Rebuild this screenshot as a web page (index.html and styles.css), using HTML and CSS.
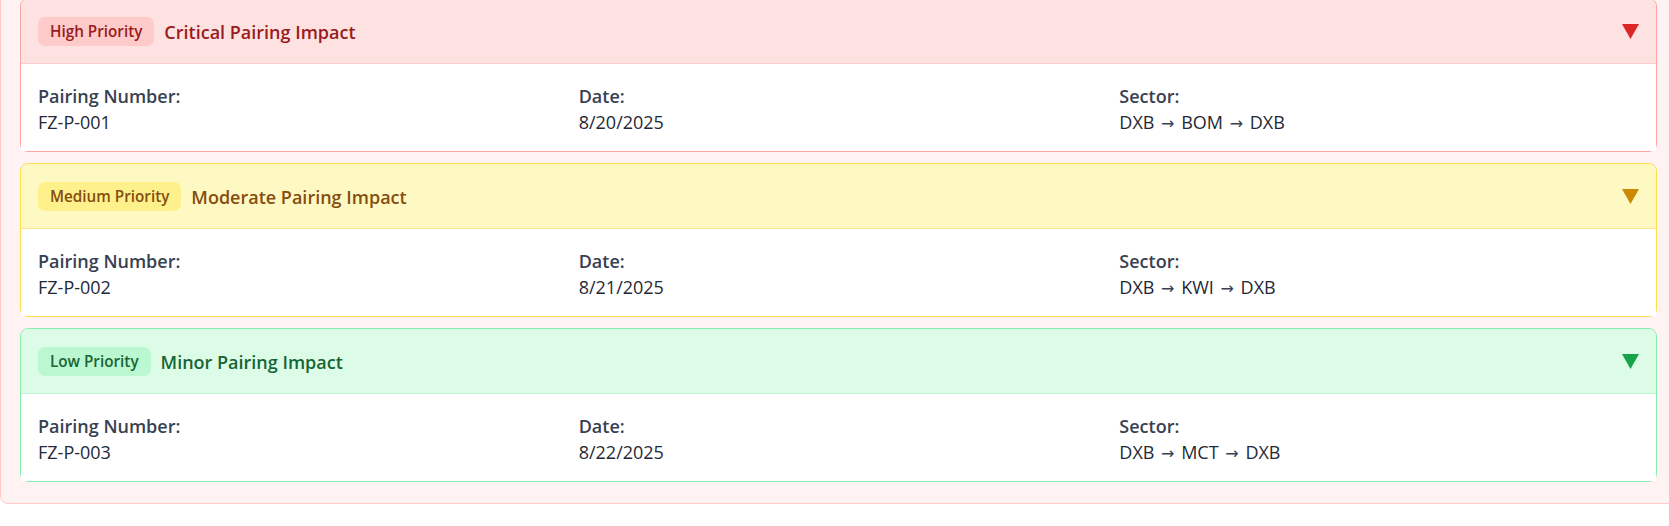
FILE: index.html
```html
<!DOCTYPE html>
<html lang="en">
<head>
<meta charset="utf-8">
<title>Pairing Impacts</title>
<link rel="stylesheet" href="styles.css">
</head>
<body>
<div class="panel">
  <div class="card card-high">
    <div class="card-head">
      <div class="head-left">
        <span class="badge">High Priority</span>
        <span class="title">Critical Pairing Impact</span>
      </div>
      <button class="toggle" aria-label="Toggle">
        <svg width="17" height="15" viewBox="0 0 17 15"><polygon points="0,0 17,0 8.5,15" fill="currentColor"/></svg>
      </button>
    </div>
    <div class="card-body">
      <div class="field"><div class="label">Pairing Number:</div><div class="value">FZ-P-001</div></div>
      <div class="field"><div class="label">Date:</div><div class="value">8/20/2025</div></div>
      <div class="field"><div class="label">Sector:</div><div class="value">DXB <span class="arrow">→</span> BOM <span class="arrow">→</span> DXB</div></div>
    </div>
  </div>

  <div class="card card-medium">
    <div class="card-head">
      <div class="head-left">
        <span class="badge">Medium Priority</span>
        <span class="title">Moderate Pairing Impact</span>
      </div>
      <button class="toggle" aria-label="Toggle">
        <svg width="17" height="15" viewBox="0 0 17 15"><polygon points="0,0 17,0 8.5,15" fill="currentColor"/></svg>
      </button>
    </div>
    <div class="card-body">
      <div class="field"><div class="label">Pairing Number:</div><div class="value">FZ-P-002</div></div>
      <div class="field"><div class="label">Date:</div><div class="value">8/21/2025</div></div>
      <div class="field"><div class="label">Sector:</div><div class="value">DXB <span class="arrow">→</span> KWI <span class="arrow">→</span> DXB</div></div>
    </div>
  </div>

  <div class="card card-low">
    <div class="card-head">
      <div class="head-left">
        <span class="badge">Low Priority</span>
        <span class="title">Minor Pairing Impact</span>
      </div>
      <button class="toggle" aria-label="Toggle">
        <svg width="17" height="15" viewBox="0 0 17 15"><polygon points="0,0 17,0 8.5,15" fill="currentColor"/></svg>
      </button>
    </div>
    <div class="card-body">
      <div class="field"><div class="label">Pairing Number:</div><div class="value">FZ-P-003</div></div>
      <div class="field"><div class="label">Date:</div><div class="value">8/22/2025</div></div>
      <div class="field"><div class="label">Sector:</div><div class="value">DXB <span class="arrow">→</span> MCT <span class="arrow">→</span> DXB</div></div>
    </div>
  </div>
</div>
</body>
</html>
```

FILE: styles.css
```css
* { box-sizing: border-box; }

html, body {
  margin: 0;
  padding: 0;
  background: #ffffff;
  overflow: hidden;
}

body {
  font-family: "Open Sans", "Noto Sans", sans-serif;
  color: #1f2937;
}

.panel {
  width: calc(100% + 8px);
  margin-top: -23px;
  background: #fef2f2;
  border: 1px solid #fecaca;
  border-radius: 8px;
  padding: 20px 19px 21px 19px;
  display: flex;
  flex-direction: column;
  gap: 11px;
}

.card {
  border: 1px solid;
  border-radius: 8px;
}

.card-head {
  height: 65px;
  padding: 0 17px;
  display: flex;
  align-items: center;
  justify-content: space-between;
  border-bottom: 1px solid;
  border-radius: 7px 7px 0 0;
}

.head-left {
  display: flex;
  align-items: center;
  gap: 10px;
}

.badge {
  display: inline-block;
  font-size: 15.25px;
  line-height: 21px;
  font-weight: 600;
  padding: 4px 12px;
  border-radius: 7px;
}

.title {
  font-size: 18px;
  font-weight: 600;
  line-height: 28px;
  padding-top: 1px;
}

.toggle {
  background: none;
  border: 0;
  padding: 0;
  margin: 0;
  width: 17px;
  height: 15px;
  display: flex;
  cursor: pointer;
  margin-top: 1px;
}

.card-body {
  background: #ffffff;
  padding: 20px 17px 17px 17px;
  display: grid;
  grid-template-columns: 1fr 1fr 1fr;
  column-gap: 21px;
}

.label {
  font-size: 18px;
  line-height: 24px;
  font-weight: 600;
  color: #374151;
  margin-bottom: 2px;
}

.value {
  font-size: 18px;
  line-height: 24px;
  color: #1f2937;
}

.arrow {
  font-family: "DejaVu Sans", sans-serif;
  font-size: 16px;
  line-height: 1;
  margin: 0 2px;
  color: #374151;
}

/* High */
.card-high { border-color: #fca5a5; }
.card-high .card-head { background: #fee2e2; border-bottom-color: #fecaca; }
.card-high .badge { background: #fecaca; color: #991b1b; }
.card-high .title { color: #991b1b; }
.card-high .toggle { color: #dc2626; }

/* Medium */
.card-medium { border-color: #fde047; }
.card-medium .card-head { background: #fef9c3; border-bottom-color: #fde68a; }
.card-medium .badge { background: #fef08a; color: #854d0e; }
.card-medium .title { color: #854d0e; }
.card-medium .toggle { color: #ca8a04; }

/* Low */
.card-low { border-color: #86efac; }
.card-low .card-head { background: #dcfce7; border-bottom-color: #bbf7d0; }
.card-low .badge { background: #bbf7d0; color: #166534; }
.card-low .title { color: #166534; }
.card-low .toggle { color: #16a34a; }
```
